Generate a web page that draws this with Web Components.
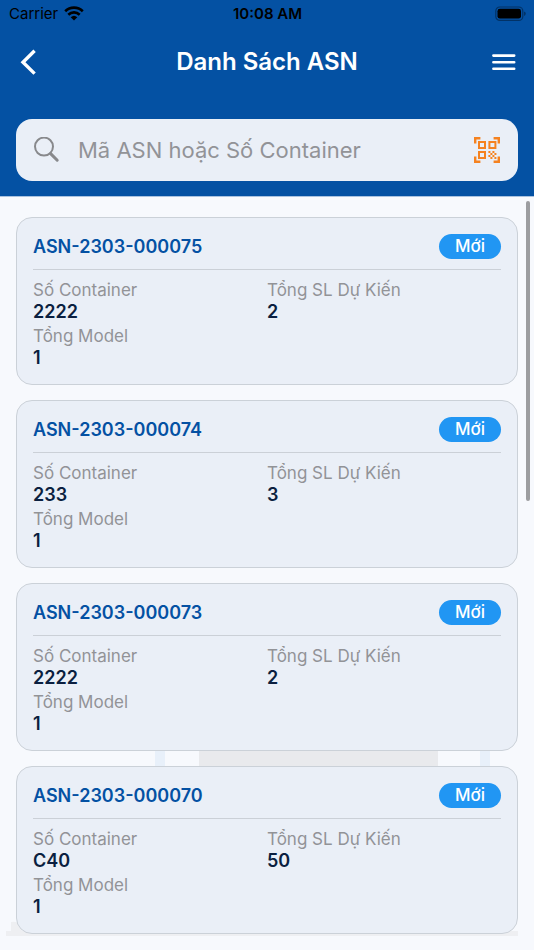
<!DOCTYPE html>
<html lang="vi">
<head>
<meta charset="utf-8">
<meta name="viewport" content="width=device-width, initial-scale=1">
<title>Danh Sách ASN</title>
<style>
	body {
		margin: 0;
		background: #f7f9fd;
		font-family: Inter, "Open Sans", sans-serif;
		color: #0b1f40;
	}
</style>
</head>
<body>
<asn-screen>
	<status-bar slot="header" carrier="Carrier" time="10:08 AM"></status-bar>
	<nav-bar slot="header">Danh Sách ASN</nav-bar>
	<search-box slot="header" placeholder="Mã ASN hoặc Số Container"></search-box>

	<asn-card code="ASN-2303-000075" container="2222" expected="2" models="1">Mới</asn-card>
	<asn-card code="ASN-2303-000074" container="233" expected="3" models="1">Mới</asn-card>
	<asn-card code="ASN-2303-000073" container="2222" expected="2" models="1">Mới</asn-card>
	<asn-card code="ASN-2303-000070" container="C40" expected="50" models="1">Mới</asn-card>
</asn-screen>

<script>
// Page frame: blue header on top, scrolling list below
class AsnScreen extends HTMLElement {
	constructor() {
		super();
		this.attachShadow({ mode: 'open' });
		this.shadowRoot.innerHTML = `
			<style>
			:host {
				display: flex;
				flex-direction: column;
				min-height: 100vh;
			}

			header {
				display: flex;
				flex-direction: column;
				padding-bottom: 15px;
				background: #0451a3;
				border-bottom: 1px solid #a9c2df;
			}

			main {
				position: relative;
				flex: 1;
				display: flex;
				flex-direction: column;
				gap: 15px;
				padding: 20px 16px 16px;
			}

			/* Faint warehouse drawing behind the cards */
			.backdrop {
				position: absolute;
				left: 0;
				bottom: 0;
				width: 100%;
			}

			.scroll-thumb {
				position: absolute;
				top: 4px;
				right: 4px;
				width: 4px;
				height: 300px;
				border-radius: 2px;
				background: #9c9da0;
			}
			</style>

			<header><slot name="header"></slot></header>
			<main>
				<svg class="backdrop" viewBox="0 0 534 210" aria-hidden="true">
					<path fill="#e8f0fa" d="M155 0h10v50h-10zM480 0h10v50h-10z"/>
					<path fill="#e9eaed" d="M199 0h239v50H199z"/>
					<path fill="#eeeff2" d="M11 182q9-2 11 9H11zM6 191h512v5H6z"/>
				</svg>
				<slot></slot>
				<div class="scroll-thumb"></div>
			</main>
		`;
	}
}

class StatusBar extends HTMLElement {
	constructor() {
		super();
		this.attachShadow({ mode: 'open' });
		this.shadowRoot.innerHTML = `
			<style>
			:host {
				display: grid;
				grid-template-columns: 1fr auto 1fr;
				align-items: center;
				height: 28px;
				padding: 0 8px 0 9px;
				color: #000;
				font-size: 15px;
				line-height: 28px;
			}

			.left {
				display: flex;
				align-items: center;
				gap: 6px;
			}

			.time {
				font-weight: 600;
			}

			.battery {
				justify-self: end;
			}
			</style>

			<span class="left">
				<span class="carrier"></span>
				<svg width="20" height="16" viewBox="0 0 20 16" aria-hidden="true">
					<g fill="none" stroke="#000" stroke-width="2.6">
						<path d="M1.2 5.2a12.6 12.6 0 0 1 17.6 0"/>
						<path d="M4.3 8.7a8.2 8.2 0 0 1 11.4 0"/>
					</g>
					<path d="M10 14.6l-3.3-3.4a4.9 4.9 0 0 1 6.6 0z"/>
				</svg>
			</span>
			<span class="time"></span>
			<svg class="battery" width="31" height="16" viewBox="0 0 31 16" aria-hidden="true">
				<rect x=".8" y="1" width="27" height="13.4" rx="4" fill="none" stroke="#023266" stroke-width="1.2"/>
				<rect x="2.5" y="2.8" width="23.5" height="9.8" rx="2.4"/>
				<path fill="#023266" d="M29 5.6q1.8.6 1.8 2.2T29 10z"/>
			</svg>
		`;
	}

	connectedCallback() {
		this.shadowRoot.querySelector('.carrier').textContent = this.getAttribute('carrier');
		this.shadowRoot.querySelector('.time').textContent = this.getAttribute('time');
	}
}

class NavBar extends HTMLElement {
	constructor() {
		super();
		this.attachShadow({ mode: 'open' });
		this.shadowRoot.innerHTML = `
			<style>
			:host {
				display: flex;
				align-items: center;
				justify-content: space-between;
				height: 68px;
				padding: 0 16px;
				color: #fff;
			}

			h1 {
				margin: 0;
				font-size: 24px;
				font-weight: 600;
				line-height: 32px;
			}

			button {
				display: flex;
				padding: 0;
				border: 0;
				background: none;
				color: inherit;
				cursor: pointer;
			}
			</style>

			<button type="button" aria-label="Quay lại">
				<svg width="28" height="28" viewBox="0 0 28 28" fill="none" stroke="currentColor" stroke-width="3.4">
					<path d="M18.6 2.8L7 14.2l11.6 11.4"/>
				</svg>
			</button>
			<h1><slot></slot></h1>
			<button type="button" aria-label="Menu">
				<svg width="28" height="28" viewBox="0 0 28 28" stroke="currentColor" stroke-width="2.6" stroke-linecap="round">
					<path d="M3.4 7.6h20.8M3.4 14.2h20.8M3.4 20.8h20.8"/>
				</svg>
			</button>
		`;
	}
}

class SearchBox extends HTMLElement {
	constructor() {
		super();
		this.attachShadow({ mode: 'open' });
		this.shadowRoot.innerHTML = `
			<style>
			:host {
				display: flex;
				align-items: center;
				gap: 18px;
				height: 62px;
				margin: 23px 16px 0;
				padding: 0 17px;
				box-sizing: border-box;
				border-radius: 16px;
				background: #eaeff7;
			}

			svg {
				display: block;
				flex: none;
			}

			input {
				flex: 1;
				min-width: 0;
				padding: 0;
				border: 0;
				outline: 0;
				background: none;
				color: #0b1f40;
				font: inherit;
				font-size: 22px;
				line-height: 32px;
			}

			input::placeholder {
				color: #929397;
				opacity: 1;
			}

			button {
				padding: 0;
				border: 0;
				background: none;
				color: #f58220;
				cursor: pointer;
			}
			</style>

			<svg width="27" height="27" viewBox="0 0 27 27" fill="none" stroke="#88898c" aria-hidden="true">
				<circle cx="11" cy="9.6" r="9" stroke-width="2"/>
				<path d="M17.6 16.6l6.6 6.6" stroke-width="3" stroke-linecap="round"/>
			</svg>
			<input type="search">
			<button type="button" aria-label="Quét mã QR">
				<svg width="28" height="28" viewBox="0 0 28 28">
					<g fill="none" stroke="currentColor" stroke-width="2">
						<path d="M2.2 7.4V2.2h5.2M20.6 2.2h5.2v5.2M2.2 20.6v5.2h5.2M20.6 25.8h5.2v-5.2" stroke-width="2.4"/>
						<path d="M6 6h6v6H6zM16.4 6h6v6h-6zM6 16h6v6H6z"/>
					</g>
					<path fill="currentColor" d="M15.4 15h2v2h-2zM19.4 15h2v2h-2zM17.4 17h2v2h-2zM21.4 17h2v2h-2zM15.4 19h2v2h-2zM19.4 19h2v2h-2zM17.4 21h2v2h-2zM21.4 21h2v2h-2z"/>
				</svg>
			</button>
		`;
	}

	connectedCallback() {
		const input = this.shadowRoot.querySelector('input');
		input.placeholder = this.getAttribute('placeholder');
		input.setAttribute('aria-label', input.placeholder);
	}
}

// One ASN. The slot holds the status text.
class AsnCard extends HTMLElement {
	constructor() {
		super();
		this.attachShadow({ mode: 'open' });
		this.shadowRoot.innerHTML = `
			<style>
			:host {
				position: relative;
				display: block;
				padding: 16px 16px 15px;
				border: 1px solid #cbd1d8;
				border-radius: 16px;
				background: #eaeff7;
			}

			.top {
				display: flex;
				align-items: center;
				justify-content: space-between;
				padding-bottom: 10px;
				border-bottom: 1px solid #cbd0d7;
			}

			h2 {
				margin: 0;
				color: #0451a3;
				font-size: 18px;
				font-weight: 600;
				line-height: 24px;
			}

			.status {
				padding: 0 16px;
				border-radius: 13px;
				background: #2196f3;
				color: #fff;
				font-size: 17px;
				font-weight: 500;
				line-height: 25px;
			}

			dl {
				display: grid;
				grid-template-columns: 1fr 1fr;
				row-gap: 3px;
				margin: 10px 0 0;
			}

			dt {
				color: #929397;
				font-size: 17px;
				line-height: 21px;
			}

			dd {
				margin: 0;
				font-size: 18px;
				font-weight: 600;
				line-height: 22px;
			}
			</style>

			<div class="top">
				<h2></h2>
				<span class="status"><slot></slot></span>
			</div>
			<dl>
				<div><dt>Số Container</dt><dd data-field="container"></dd></div>
				<div><dt>Tổng SL Dự Kiến</dt><dd data-field="expected"></dd></div>
				<div><dt>Tổng Model</dt><dd data-field="models"></dd></div>
			</dl>
		`;
	}

	connectedCallback() {
		this.shadowRoot.querySelector('h2').textContent = this.getAttribute('code');
		this.shadowRoot.querySelectorAll('dd').forEach((dd) => {
			dd.textContent = this.getAttribute(dd.dataset.field);
		});
	}
}

customElements.define('asn-screen', AsnScreen);
customElements.define('status-bar', StatusBar);
customElements.define('nav-bar', NavBar);
customElements.define('search-box', SearchBox);
customElements.define('asn-card', AsnCard);
</script>
</body>
</html>
